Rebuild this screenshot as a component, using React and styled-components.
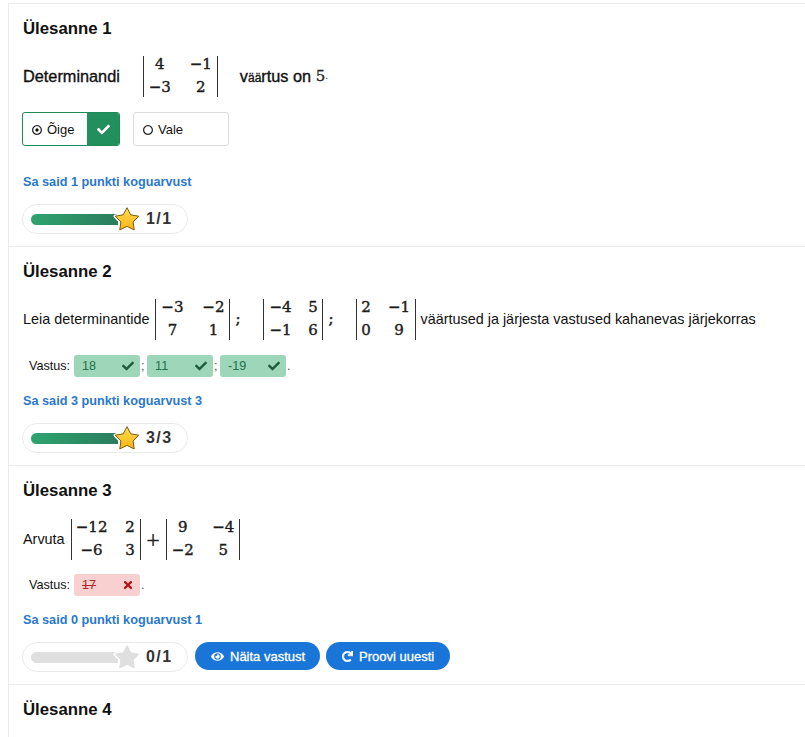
import React from "react";
import styled, { createGlobalStyle } from "styled-components";
import { FaCheck, FaTimes, FaEye, FaRedo, FaRegDotCircle, FaRegCircle } from "react-icons/fa";

const Global = createGlobalStyle`
  html, body { margin: 0; padding: 0; background: #fff; }
  body { font-family: "Liberation Sans", Arial, sans-serif; color: #111; overflow: hidden; height: 737px; }
`;

const Page = styled.div`
  margin: 3px 0 0 8px;
  height: 734px;
  overflow: hidden;
  border-top: 1px solid #ececec;
  border-left: 1px solid #ececec;
`;
const Section = styled.section`
  padding: 14px 14px 0 14px;
  height: 219px;
  box-sizing: border-box;
  border-bottom: 1px solid #ececec;
  display: flex;
  flex-direction: column;
  align-items: flex-start;
  &:first-child { height: 243px; }
  &:last-child { border-bottom: none; height: auto; }
`;
const Title = styled.h2`
  margin: 0;
  font-size: 16.8px;
  line-height: 22px;
  font-weight: 700;
  color: #111;
`;
const MathRow = styled.div`
  display: flex;
  align-items: center;
  margin-top: ${(p) => p.$top}px;
  font-size: 14.4px;
  height: 42px;
  white-space: nowrap;
`;
const Strong = styled.span`
  font-size: 16.3px;
  color: #111;
  -webkit-text-stroke: 0.35px #111;
`;
const Tiny = styled.span`
  font-size: 12px;
`;
const Det = styled.span`
  display: inline-grid;
  grid-template-columns: ${(p) => p.$cols};
  column-gap: ${(p) => p.$gap}px;
  grid-auto-rows: 23px;
  align-items: center;
  justify-items: center;
  height: 41px;
  align-content: center;
  border-left: 1.5px solid #333;
  border-right: 1.5px solid #333;
  margin: ${(p) => p.$margin || "0"};
  padding: 0 5px;
  font-family: "DejaVu Serif", "Liberation Serif", serif;
  font-size: 15px;
  font-weight: 400;
  color: #1c1c1c;
  -webkit-text-stroke: 0.4px #1c1c1c;
`;
const Cell = styled.span`
  line-height: 23px;
`;
const MathSym = styled.span`
  font-family: "DejaVu Serif", "Liberation Serif", serif;
  font-size: ${(p) => p.$size || 15}px;
  color: #222;
  margin: ${(p) => p.$margin || "0"};
  -webkit-text-stroke: ${(p) => p.$stroke || 0}px #222;
`;
const Choices = styled.div`
  display: flex;
  gap: 13px;
  margin-top: 15px;
  margin-left: -1px;
`;
const Choice = styled.div`
  display: flex;
  align-items: stretch;
  box-sizing: border-box;
  width: ${(p) => p.$width}px;
  height: 34px;
  border: 1px solid ${(p) => (p.$correct ? "#1f8a58" : "#dcdcdc")};
  border-radius: 3px;
  overflow: hidden;
  font-size: 13px;
  color: #111;
`;
const ChoiceLabel = styled.span`
  flex: 1;
  display: flex;
  align-items: center;
  gap: 5px;
  padding-left: 9px;
  svg { width: 10px; height: 10px; color: #111; stroke: #111; stroke-width: 12px; margin-top: 1px; }
`;
const ChoiceMark = styled.span`
  width: 32px;
  background: #21905c;
  display: flex;
  align-items: center;
  justify-content: center;
  color: #fff;
  svg { width: 13px; height: 13px; }
`;
const Score = styled.div`
  margin-top: ${(p) => p.$top}px;
  font-size: 12.7px;
  line-height: 16px;
  font-weight: 700;
  color: #2a78cc;
`;
const Footer = styled.div`
  display: flex;
  align-items: flex-start;
  gap: 7px;
  margin-top: 14px;
  margin-left: -1px;
`;
const Pill = styled.div`
  box-sizing: border-box;
  width: 166px;
  height: 30px;
  border: 1px solid #eaeaea;
  border-radius: 15px;
  display: flex;
  align-items: center;
  padding-left: 8px;
`;
const Track = styled.div`
  width: 87px;
  height: 11px;
  border-radius: 6px 0 0 6px;
  background: ${(p) => (p.$done ? "linear-gradient(90deg,#2ea36e,#2a7d5e)" : "#dfdfdf")};
`;
const StarBox = styled.svg`
  width: 28px;
  height: 28px;
  margin-left: -5px;
  flex: none;
`;
const Count = styled.span`
  margin-left: 5px;
  font-size: 16px;
  font-weight: 700;
  color: #333;
  word-spacing: -3px;
`;
const Answer = styled.div`
  display: flex;
  align-items: center;
  margin-top: ${(p) => p.$top}px;
  margin-left: 6px;
  font-size: 12.6px;
  height: 22px;
  color: #111;
`;
const AnswerLabel = styled.span`
  margin-right: 4px;
`;
const Badge = styled.span`
  box-sizing: border-box;
  width: 66px;
  height: 22px;
  border-radius: 3px;
  display: flex;
  align-items: center;
  justify-content: space-between;
  padding: 0 6px 0 8px;
  font-size: 12.6px;
  background: ${(p) => (p.$bad ? "#f8d0d0" : "#9dd6b8")};
  color: ${(p) => (p.$bad ? "#b3262e" : "#23704c")};
  text-decoration: ${(p) => (p.$bad ? "line-through" : "none")};
  svg { width: 12px; height: 12px; color: ${(p) => (p.$bad ? "#b5121b" : "#1d5c3e")}; }
`;
const Sep = styled.span`
  width: 6px;
  padding-left: 1px;
  color: #555;
`;
const Action = styled.button`
  border: 0;
  height: 28px;
  width: ${(p) => p.$width}px;
  padding: 0 0 0 16px;
  border-radius: 14px;
  background: #1976d8;
  color: #fff;
  font-family: inherit;
  font-size: 13px;
  font-weight: 400;
  -webkit-text-stroke: 0.3px #fff;
  display: flex;
  align-items: center;
  gap: 6px;
  margin-left: ${(p) => p.$shift || 0}px;
  svg { flex: none; width: ${(p) => p.$icon}px; height: ${(p) => p.$icon}px; stroke: #fff; stroke-width: ${(p) => p.$weight || 0}px; }
`;

const starPoints = Array.from({ length: 10 }, (_, i) => {
  const radius = i % 2 === 0 ? 12.3 : 6.4;
  const angle = (Math.PI / 5) * i - Math.PI / 2;
  return `${(14 + radius * Math.cos(angle)).toFixed(2)},${(15 + radius * Math.sin(angle)).toFixed(2)}`;
}).join(" ");

function Star({ on }) {
  const id = on ? "starOn" : "starOff";
  const fill = on ? `url(#${id})` : "#dfdfdf";
  return (
    <StarBox viewBox="0 0 28 28">
      <defs>
        <linearGradient id={id} x1="0" y1="0" x2="0" y2="1">
          <stop offset="0" stopColor="#ffdc50" />
          <stop offset="1" stopColor="#fcb514" />
        </linearGradient>
      </defs>
      <polygon points={starPoints} fill="#fff" stroke="#fff" strokeWidth="3.5" strokeLinejoin="round" />
      <polygon points={starPoints} fill={fill} stroke={on ? "#7a5c10" : "#dfdfdf"} strokeWidth="1" strokeLinejoin="round" />
    </StarBox>
  );
}

function Progress({ got, total }) {
  const on = got > 0;
  return (
    <Pill>
      <Track $done={on} />
      <Star on={on} />
      <Count>{got} / {total}</Count>
    </Pill>
  );
}

function Matrix({ cols, gap, cells, margin }) {
  return (
    <Det $cols={cols} $gap={gap} $margin={margin}>
      {cells.map((c, i) => <Cell key={i}>{c}</Cell>)}
    </Det>
  );
}

export default function App() {
  return (
    <Page>
      <Global />
      <Section>
        <Title>Ülesanne 1</Title>
        <MathRow $top={15}>
          <Strong>Determinandi</Strong>
          <Matrix cols="22px 22px" gap={19} margin="0 22px 0 23px" cells={["4", "−1", "−3", "2"]} />
          <Strong>v<Tiny>ää</Tiny>rtus on&nbsp;</Strong>
          <MathSym $stroke={0.3}>5</MathSym>
          <MathSym $size={9}>.</MathSym>
        </MathRow>
        <Choices>
          <Choice $width={98} $correct>
            <ChoiceLabel><FaRegDotCircle />Õige</ChoiceLabel>
            <ChoiceMark><FaCheck /></ChoiceMark>
          </Choice>
          <Choice $width={96}>
            <ChoiceLabel><FaRegCircle />Vale</ChoiceLabel>
          </Choice>
        </Choices>
        <Score $top={28}>Sa said 1 punkti koguarvust</Score>
        <Footer><Progress got={1} total={1} /></Footer>
      </Section>
      <Section>
        <Title>Ülesanne 2</Title>
        <MathRow $top={15}>
          Leia determinantide
          <Matrix cols="22px 22px" gap={19} margin="0 0 0 6px" cells={["−3", "−2", "7", "1"]} />
          <MathSym $stroke={0.5} $margin="0 23px 0 5px">;</MathSym>
          <Matrix cols="22px 9px" gap={17} cells={["−4", "5", "−1", "6"]} />
          <MathSym $stroke={0.5} $margin="0 22px 0 5px">;</MathSym>
          <Matrix cols="9px 21px" gap={18} margin="0 5px 0 0" cells={["2", "−1", "0", "9"]} />
          väärtused ja järjesta vastused kahanevas järjekorras
        </MathRow>
        <Answer $top={15}>
          <AnswerLabel>Vastus:</AnswerLabel>
          <Badge>18<FaCheck /></Badge><Sep>;</Sep>
          <Badge>11<FaCheck /></Badge><Sep>;</Sep>
          <Badge>-19<FaCheck /></Badge><Sep>.</Sep>
        </Answer>
        <Score $top={16}>Sa said 3 punkti koguarvust 3</Score>
        <Footer><Progress got={3} total={3} /></Footer>
      </Section>
      <Section>
        <Title>Ülesanne 3</Title>
        <MathRow $top={16}>
          Arvuta
          <Matrix cols="30px 9px" gap={19} margin="0 0 0 6px" cells={["−12", "2", "−6", "3"]} />
          <MathSym $size={18} $margin="0 5px 0 5px">+</MathSym>
          <Matrix cols="22px 21px" gap={19} cells={["9", "−4", "−2", "5"]} />
        </MathRow>
        <Answer $top={14}>
          <AnswerLabel>Vastus:</AnswerLabel>
          <Badge $bad>17<FaTimes /></Badge><Sep>.</Sep>
        </Answer>
        <Score $top={16}>Sa said 0 punkti koguarvust 1</Score>
        <Footer>
          <Progress got={0} total={1} />
          <Action $icon={13} $width={125}><FaEye />Näita vastust</Action>
          <Action $icon={11} $weight={30} $width={124} $shift={-1}><FaRedo />Proovi uuesti</Action>
        </Footer>
      </Section>
      <Section>
        <Title>Ülesanne 4</Title>
      </Section>
    </Page>
  );
}
